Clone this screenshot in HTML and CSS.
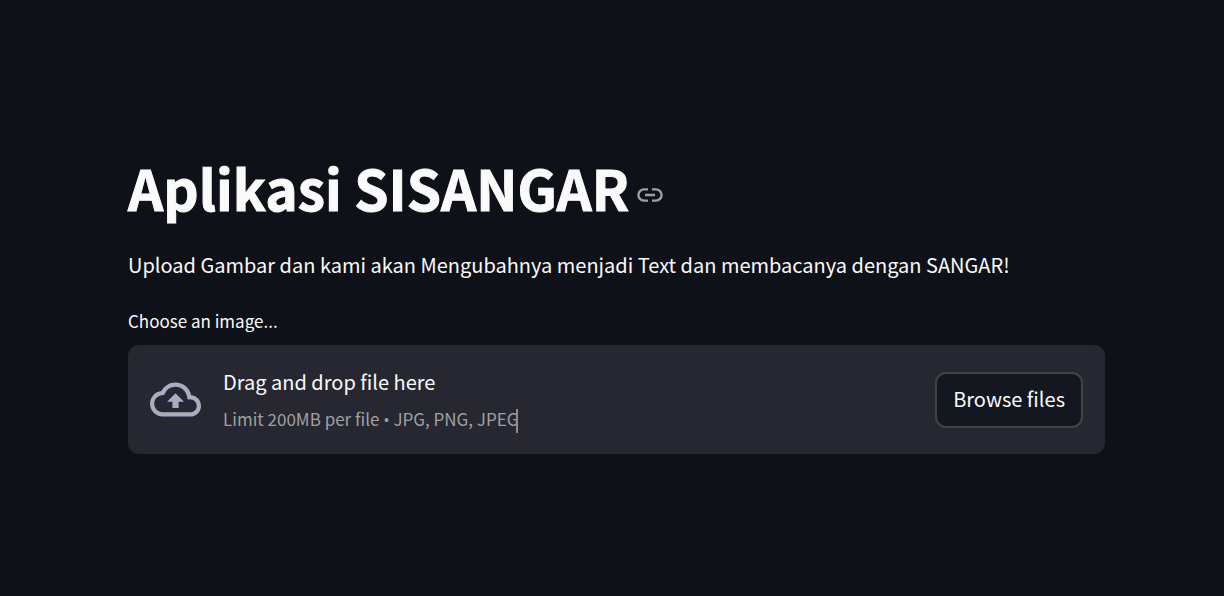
FILE: index.html
```html
<!DOCTYPE html>
<html lang="id">
<head>
<meta charset="utf-8">
<meta name="viewport" content="width=device-width, initial-scale=1">
<title>Aplikasi SISANGAR</title>
<link rel="stylesheet" href="styles.css">
</head>
<body>
<main class="page">
  <header class="heading">
    <h1 class="title" id="aplikasi-sisangar">Aplikasi SISANGAR</h1>
    <a class="anchor" href="#aplikasi-sisangar" aria-label="Link to heading">
      <svg class="anchor-icon" viewBox="0 0 26 14" fill="none" stroke="currentColor" stroke-width="2.4" aria-hidden="true">
        <path d="M11 1.4H7a5.6 5.6 0 0 0 0 11.2h4M15 1.4h4a5.6 5.6 0 0 1 0 11.2h-4M8 7h10"/>
      </svg>
    </a>
  </header>
  <p class="intro">Upload Gambar dan kami akan Mengubahnya menjadi Text dan membacanya dengan SANGAR!</p>
  <section class="uploader">
    <h2 class="label" id="upload-label">Choose an image...</h2>
    <div class="dropzone" role="group" aria-labelledby="upload-label">
      <svg class="cloud" viewBox="0 0 24 24" fill="currentColor" aria-hidden="true">
        <path d="M19.35 10.04A7.49 7.49 0 0 0 12 4C9.11 4 6.6 5.64 5.35 8.04A5.994 5.994 0 0 0 0 14c0 3.31 2.69 6 6 6h13c2.76 0 5-2.24 5-5 0-2.64-2.05-4.78-4.65-4.96zM19 18H6c-2.21 0-4-1.79-4-4 0-2.05 1.53-3.76 3.56-3.97l1.07-.11.5-.95A5.469 5.469 0 0 1 12 6c2.62 0 4.88 1.86 5.39 4.43l.3 1.5 1.53.11A2.98 2.98 0 0 1 22 15c0 1.65-1.35 3-3 3zM8 13h2.55v3h2.9v-3H16l-4-4z"/>
      </svg>
      <div class="instructions">
        <span class="prompt">Drag and drop file here</span>
        <span class="limit">Limit 200MB per file <span class="dot">•</span> JPG, PNG, JPEG<span class="caret"></span></span>
      </div>
      <button class="browse" type="button">Browse files</button>
    </div>
  </section>
</main>
</body>
</html>
```
FILE: styles.css
```css
* {
  box-sizing: border-box;
}

body {
  margin: 0;
  background: #0e1117;
  color: #fafafa;
  font-family: "Noto Sans CJK SC", "Noto Sans", sans-serif;
  font-size: 20px;
  line-height: 32px;
}

.page {
  padding: 153px 119px 32px 128px;
}

.heading {
  display: flex;
  align-items: center;
  gap: 8px;
}

.title {
  margin: 0;
  font-size: 55px;
  font-weight: 700;
  line-height: 68px;
  -webkit-text-stroke: 1px currentColor;
}

.anchor {
  display: flex;
  padding-top: 16px;
  color: #a0a0a0;
}

.anchor-icon {
  width: 26px;
  height: 14px;
}

.intro {
  margin: 28px 0 0;
}

.uploader {
  margin-top: 28px;
}

.label {
  margin: 0 0 12px;
  font-size: 17px;
  font-weight: 400;
  line-height: 24px;
}

.dropzone {
  display: flex;
  align-items: center;
  padding: 21px 22px;
  border-radius: 11px;
  background: #262730;
}

.cloud {
  flex: none;
  width: 51px;
  height: 51px;
  margin-right: 22px;
  color: #a9adc1;
}

.instructions {
  display: flex;
  flex-direction: column;
  flex: 1;
  gap: 7px;
}

.prompt {
  line-height: 32px;
}

.limit {
  color: #a0a0a2;
  font-size: 17px;
  line-height: 28px;
}

.dot {
  font-family: "Open Sans", sans-serif;
  line-height: 1;
}

.caret {
  display: inline-block;
  width: 2px;
  height: 24px;
  margin-left: -2px;
  background: #8c8c90;
  vertical-align: middle;
}

.browse {
  padding: 9px 16px 11px;
  border: 2px solid #41434b;
  border-radius: 11px;
  background: #131720;
  color: inherit;
  font: inherit;
}
```
